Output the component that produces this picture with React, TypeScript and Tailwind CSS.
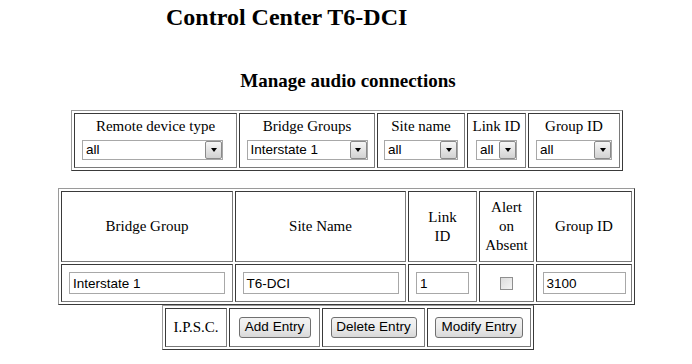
import React from "react";

const serif = "font-['Liberation_Serif','Times_New_Roman',serif]";
const sans = "font-['Liberation_Sans',Arial,sans-serif]";

const tableCls =
  "table-fixed border-separate border-spacing-[2px] border border-t-[#9a9a9a] border-l-[#9a9a9a] border-r-[#3a3a3a] border-b-[#3a3a3a]";
const cellCls =
  "border border-t-[#3a3a3a] border-l-[#3a3a3a] border-r-[#7a7a7a] border-b-[#7a7a7a] p-0 text-center align-middle";

function Select({ value, w }: { value: string; w: string }) {
  return (
    <div className={`flex h-[20px] items-stretch border border-[#a8a8a8] bg-white ${w}`}>
      <span className={`flex flex-1 items-center overflow-hidden pl-[3px] text-left text-[13.5px] leading-none text-black ${sans}`}>
        {value}
      </span>
      <span className="flex w-[17px] items-center justify-center rounded-[2px] border border-[#8a8a8a] bg-gradient-to-b from-[#f6f6f6] to-[#d2d2d2]">
        <span className="h-0 w-0 border-x-[3.5px] border-t-[4px] border-x-transparent border-t-black" />
      </span>
    </div>
  );
}

function TextBox({ value, w }: { value: string; w: string }) {
  return (
    <div
      className={`mx-auto flex h-[22px] items-center border border-[#a8a8a8] bg-white pl-[3px] text-left text-[13.5px] text-black ${sans} ${w}`}
    >
      {value}
    </div>
  );
}

function Btn({ label, w }: { label: string; w: string }) {
  return (
    <div
      className={`mx-auto flex h-[21px] items-center justify-center rounded-[3px] border border-[#707070] bg-gradient-to-b from-[#f3f3f3] via-[#ebebeb] to-[#d8d8d8] text-[13.5px] text-black ${sans} ${w}`}
    >
      {label}
    </div>
  );
}

function FilterCell({
  label,
  children,
  w,
  left,
}: {
  label: string;
  children: React.ReactNode;
  w: string;
  left?: boolean;
}) {
  return (
    <td className={`${cellCls} ${w} h-[55px]`}>
      <div className="flex flex-col items-center pt-[2px] pb-[7px]">
        <div className="leading-[19px]">{label}</div>
        <div className={`mt-[4px] ${left ? "self-start pl-[7px]" : ""}`}>{children}</div>
      </div>
    </td>
  );
}

export default function App() {
  return (
    <div className={`h-[364px] w-[692px] overflow-hidden bg-white text-black ${serif}`}>
      <h1 className="mt-[3px] pl-[166px] text-[24px] font-bold leading-[28px]">
        Control Center T6-DCI
      </h1>
      <h3 className="mt-[39px] pl-[4px] text-center text-[19px] font-bold leading-[22px]">
        Manage audio connections
      </h3>

      <table className={`${tableCls} mt-[18px] ml-[71px] w-[552px] text-[15px]`}>
        <tbody>
          <tr>
            <FilterCell label="Remote device type" w="w-[163px]" left>
              <Select value="all" w="w-[141px]" />
            </FilterCell>
            <FilterCell label="Bridge Groups" w="w-[136px]">
              <Select value="Interstate 1" w="w-[121px]" />
            </FilterCell>
            <FilterCell label="Site name" w="w-[88px]">
              <Select value="all" w="w-[74px]" />
            </FilterCell>
            <FilterCell label="Link ID" w="w-[59px]">
              <Select value="all" w="w-[41px]" />
            </FilterCell>
            <FilterCell label="Group ID" w="w-[92px]">
              <Select value="all" w="w-[76px]" />
            </FilterCell>
          </tr>
        </tbody>
      </table>

      <table className={`${tableCls} mt-[17px] ml-[58px] w-[577px] text-[15px] leading-[19px]`}>
        <tbody>
          <tr>
            <td className={`${cellCls} h-[71px] w-[172px]`}>Bridge Group</td>
            <td className={`${cellCls} w-[171px]`}>Site Name</td>
            <td className={`${cellCls} w-[69px]`}>
              Link
              <br />
              ID
            </td>
            <td className={`${cellCls} w-[55px]`}>
              Alert
              <br />
              on
              <br />
              Absent
            </td>
            <td className={`${cellCls} w-[96px]`}>Group ID</td>
          </tr>
          <tr>
            <td className={`${cellCls} h-[38px]`}>
              <TextBox value="Interstate 1" w="w-[156px]" />
            </td>
            <td className={cellCls}>
              <TextBox value="T6-DCI" w="w-[156px]" />
            </td>
            <td className={cellCls}>
              <TextBox value="1" w="w-[53px]" />
            </td>
            <td className={cellCls}>
              <div className="mx-auto h-[13px] w-[13px] border border-[#8f8f8f] bg-gradient-to-br from-[#dcdcdc] to-[#f4f4f4]" />
            </td>
            <td className={cellCls}>
              <TextBox value="3100" w="w-[83px]" />
            </td>
          </tr>
        </tbody>
      </table>

      <table className={`${tableCls} ml-[162px] w-[372px] text-[15px]`}>
        <tbody>
          <tr>
            <td className={`${cellCls} h-[39px] w-[62px]`}>I.P.S.C.</td>
            <td className={`${cellCls} w-[91px]`}>
              <Btn label="Add Entry" w="w-[72px]" />
            </td>
            <td className={`${cellCls} w-[103px]`}>
              <Btn label="Delete Entry" w="w-[86px]" />
            </td>
            <td className={`${cellCls} w-[104px]`}>
              <Btn label="Modify Entry" w="w-[88px]" />
            </td>
          </tr>
        </tbody>
      </table>
    </div>
  );
}
